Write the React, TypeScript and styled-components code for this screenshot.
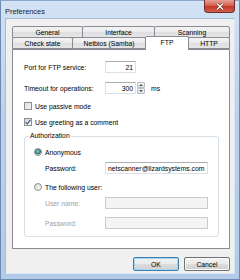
import React from 'react';
import styled, { createGlobalStyle } from 'styled-components';

const GlobalStyle = createGlobalStyle`
  html, body {
    margin: 0;
    padding: 0;
    background: #ffffff;
  }
  body {
    font-family: "Liberation Sans", Arial, sans-serif;
    font-size: 6.8px;
    color: #000;
  }
`;

const Window = styled.div`
  width: 240px;
  height: 280px;
  box-sizing: border-box;
  display: flex;
  flex-direction: column;
  padding: 0 5px 5px 5px;
  background: linear-gradient(180deg, #d3e2f4 0%, #bcd2ec 40%, #b3cbe8 100%);
  border: 1px solid #6d8bb0;
  border-top-color: #8aa6c9;
`;

const TitleBar = styled.div`
  height: 17px;
  display: flex;
  justify-content: space-between;
  align-items: flex-start;
`;

const Title = styled.div`
  font-size: 7.4px;
  padding-top: 6px;
  margin-left: -1px;
  color: #1a1a1a;
`;

const CloseButton = styled.div`
  width: 29px;
  height: 12px;
  margin-top: -1px;
  margin-right: -1px;
  border: 1px solid #6b2e2b;
  border-top: none;
  border-radius: 0 0 4px 4px;
  background: linear-gradient(180deg, #e8a093 0%, #d66453 45%, #c23a26 55%, #d25d48 100%);
  display: flex;
  align-items: center;
  justify-content: center;
`;

const Client = styled.div`
  flex: 1;
  display: flex;
  flex-direction: column;
  background: #f0f0f0;
  padding: 7px 6px 0 6px;
  border: 1px solid #a5bcd8;
  border-bottom-color: #dbe6f3;
  border-right-color: #dbe6f3;
  box-sizing: border-box;
  margin-left: -1px;
  margin-right: -1px;
`;

const TabRow = styled.div<{ h: number }>`
  display: flex;
  align-items: flex-end;
  height: ${p => p.h}px;
  width: 218px;
`;

const Tab = styled.div<{ w: number; active?: boolean }>`
  width: ${p => p.w}px;
  box-sizing: border-box;
  height: ${p => (p.active ? 14 : 12)}px;
  margin-left: -1px;
  margin-bottom: ${p => (p.active ? -1 : 0)}px;
  border: 1px solid #898c95;
  border-bottom: ${p => (p.active ? 'none' : '1px solid #898c95')};
  border-radius: 2px 2px 0 0;
  background: ${p =>
    p.active ? '#ffffff' : 'linear-gradient(180deg, #f3f3f3 0%, #ebebeb 50%, #dedede 51%, #e6e6e6 100%)'};
  position: relative;
  z-index: ${p => (p.active ? 2 : 1)};
  display: flex;
  align-items: center;
  justify-content: center;
  padding-bottom: ${p => (p.active ? 2 : 0)}px;
  &:first-child {
    margin-left: 0;
  }
`;

const Panel = styled.div`
  width: 218px;
  height: 200px;
  box-sizing: border-box;
  background: #ffffff;
  border: 1px solid #898c95;
  padding: 11px 11px 0 11px;
  display: flex;
  flex-direction: column;
`;

const Row = styled.div<{ gap?: number; indent?: number }>`
  display: flex;
  align-items: center;
  height: 12px;
  margin-top: ${p => p.gap ?? 0}px;
  padding-left: ${p => p.indent ?? 0}px;
`;

const Label = styled.span<{ w?: number; disabled?: boolean }>`
  width: ${p => (p.w ? `${p.w}px` : 'auto')};
  flex: none;
  color: ${p => (p.disabled ? '#a0a0a0' : '#000')};
`;

const TextBox = styled.div<{ w: number; align?: string; disabled?: boolean }>`
  width: ${p => p.w}px;
  height: 12px;
  box-sizing: border-box;
  border: 1px solid #dbdfe6;
  border-top-color: #abadb3;
  background: ${p => (p.disabled ? '#f4f4f4' : '#fff')};
  border-color: ${p => (p.disabled ? '#c9cbcf' : undefined)};
  display: flex;
  align-items: center;
  justify-content: ${p => (p.align === 'right' ? 'flex-end' : 'flex-start')};
  padding: 0 2px;
`;

const Spinner = styled.div`
  display: flex;
  flex-direction: column;
  width: 8px;
  height: 12px;
  margin-left: 1px;
`;

const SpinButton = styled.div`
  flex: 1;
  box-sizing: border-box;
  border: 1px solid #b9bcc3;
  border-radius: 1px;
  background: linear-gradient(180deg, #f7f7f7, #e2e3e6);
  display: flex;
  align-items: center;
  justify-content: center;
  & + & {
    margin-top: 0;
  }
`;

const Unit = styled.span`
  margin-left: 6px;
`;

const CheckBox = styled.div`
  width: 8px;
  height: 8px;
  box-sizing: border-box;
  border: 1px solid #8e8f8f;
  background: linear-gradient(135deg, #dcdcdc 0%, #f6f6f6 100%);
  margin-right: 3px;
  display: flex;
  align-items: center;
  justify-content: center;
`;

const Radio = styled.div<{ checked?: boolean }>`
  width: 8px;
  height: 8px;
  box-sizing: border-box;
  border: 1px solid #8e8f8f;
  border-radius: 50%;
  background: ${p =>
    p.checked
      ? 'radial-gradient(circle at 45% 40%, #8fd0c8 0%, #3d8a86 45%, #2b6a6e 60%, #e8e8e8 68%)'
      : 'linear-gradient(135deg, #dadada, #f7f7f7)'};
  margin-right: 3px;
`;

const GroupBox = styled.div`
  position: relative;
  margin-top: 8px;
  width: 195px;
  height: 101px;
  box-sizing: border-box;
  border: 1px solid #d5dfe5;
  border-radius: 3px;
  padding: 9px 0 0 9px;
  display: flex;
  flex-direction: column;
`;

const GroupTitle = styled.span`
  position: absolute;
  top: -5px;
  left: 4px;
  background: #fff;
  padding: 0 1px;
  line-height: 8px;
`;

const ButtonBar = styled.div`
  display: flex;
  justify-content: flex-end;
  gap: 5px;
  margin-top: 8px;
  width: 218px;
`;

const Button = styled.div<{ primary?: boolean }>`
  width: 46px;
  height: 14px;
  box-sizing: border-box;
  border: 1px solid ${p => (p.primary ? '#3c7fb1' : '#707070')};
  border-radius: 2px;
  background: linear-gradient(180deg, #f2f2f2 0%, #ebebeb 48%, #dddddd 50%, #cfcfcf 100%);
  box-shadow: ${p => (p.primary ? 'inset 0 0 0 1px #a6d6f3' : 'inset 0 0 0 1px #fbfbfb')};
  display: flex;
  align-items: center;
  justify-content: center;
`;

const Check = () => (
  <svg width="6" height="6" viewBox="0 0 6 6">
    <path d="M0.6 3.2 L2.3 4.9 L5.4 0.8" fill="none" stroke="#3f5490" strokeWidth="1.2" />
  </svg>
);

const Arrow = ({ up }: { up?: boolean }) => (
  <svg width="4" height="2" viewBox="0 0 4 2">
    <path d={up ? 'M0 2 L2 0 L4 2 Z' : 'M0 0 L2 2 L4 0 Z'} fill="#4d5560" />
  </svg>
);

const CloseX = () => (
  <svg width="8" height="7" viewBox="0 0 8 7">
    <path d="M1 0.5 L7 6.5 M7 0.5 L1 6.5" stroke="#5a1d17" strokeWidth="2.4" />
    <path d="M1 0.5 L7 6.5 M7 0.5 L1 6.5" stroke="#ffffff" strokeWidth="1.4" />
  </svg>
);

export default function App() {
  return (
    <>
      <GlobalStyle />
      <Window>
        <TitleBar>
          <Title>Preferences</Title>
          <CloseButton>
            <CloseX />
          </CloseButton>
        </TitleBar>
        <Client>
          <TabRow h={12}>
            <Tab w={71}>General</Tab>
            <Tab w={73}>Interface</Tab>
            <Tab w={76}>Scanning</Tab>
          </TabRow>
          <TabRow h={11}>
            <Tab w={61}>Check state</Tab>
            <Tab w={74}>Netbios (Samba)</Tab>
            <Tab w={44} active>FTP</Tab>
            <Tab w={42}>HTTP</Tab>
          </TabRow>
          <Panel>
            <Row>
              <Label w={81}>Port for FTP service:</Label>
              <TextBox w={31} align="right">21</TextBox>
            </Row>
            <Row gap={9}>
              <Label w={81}>Timeout for operations:</Label>
              <TextBox w={31} align="right">300</TextBox>
              <Spinner>
                <SpinButton><Arrow up /></SpinButton>
                <SpinButton><Arrow /></SpinButton>
              </Spinner>
              <Unit>ms</Unit>
            </Row>
            <Row gap={6}>
              <CheckBox />
              <Label>Use passive mode</Label>
            </Row>
            <Row gap={4}>
              <CheckBox>
                <Check />
              </CheckBox>
              <Label>Use greeting as a comment</Label>
            </Row>
            <GroupBox>
              <GroupTitle>Authorization</GroupTitle>
              <Row>
                <Radio checked />
                <Label>Anonymous</Label>
              </Row>
              <Row gap={4} indent={11}>
                <Label w={60}>Password:</Label>
                <TextBox w={103}>netscanner@lizardsystems.com</TextBox>
              </Row>
              <Row gap={7}>
                <Radio />
                <Label>The following user:</Label>
              </Row>
              <Row gap={4} indent={11}>
                <Label w={60} disabled>User name:</Label>
                <TextBox w={103} disabled />
              </Row>
              <Row gap={8} indent={11}>
                <Label w={60} disabled>Password:</Label>
                <TextBox w={103} disabled />
              </Row>
            </GroupBox>
          </Panel>
          <ButtonBar>
            <Button primary>OK</Button>
            <Button>Cancel</Button>
          </ButtonBar>
        </Client>
      </Window>
    </>
  );
}
